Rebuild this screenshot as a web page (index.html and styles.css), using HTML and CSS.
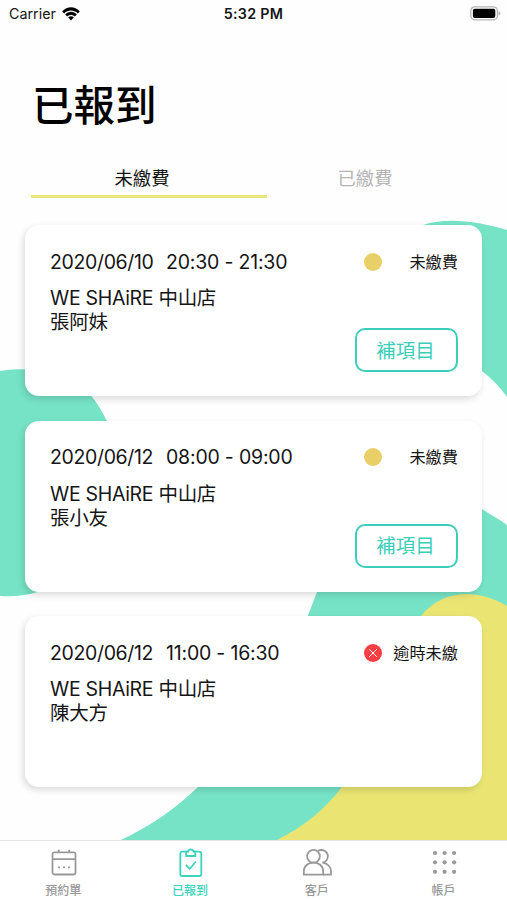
FILE: index.html
```html
<!DOCTYPE html>
<html lang="zh-Hant">

<head>
    <meta charset="UTF-8">
    <title>已報到</title>
    <link rel="stylesheet" href="styles.css">
</head>

<body>

    <div class="screen">
        <svg class="background" viewBox="0 0 507 840">
            <path class="green" d="M0 371 C18 368 39 369 59 374 C82 380 96 399 107 421 L115 592 H38 C24 596 12 597 0 596 Z" />
            <path class="green" d="M423 225 C446 217 478 221 507 230 V397 C500 387 492 379 482 371 L410 240 Z" />
            <path class="green" d="M507 525 C499 519 491 515 482 509 L330 540 L317 592 L300 636 L198 787 C174 810 150 826 121 840 H507 Z" />
            <path class="yellow" d="M507 606 C475 587 441 591 421 616 L342 787 C325 809 305 826 277 840 H507 Z" />
        </svg>

        <div class="status-bar">
            <div class="carrier">
                <span>Carrier</span>
                <svg width="18" height="14" viewBox="0 0 18 14">
                    <path d="M0.2 4.4 C5.2 -1 12.8 -1 17.8 4.4 L15.8 6.4 C12 2.6 6 2.6 2.2 6.4 Z" />
                    <path d="M3.2 7.4 C6.4 4 11.6 4 14.8 7.4 L12.8 9.4 C10.8 7.4 7.2 7.4 5.2 9.4 Z" />
                    <path d="M6.2 10.4 C7.8 8.9 10.2 8.9 11.8 10.4 L9 13.4 Z" />
                </svg>
            </div>
            <div class="time">5:32 PM</div>
            <div class="battery">
                <svg width="31" height="15" viewBox="0 0 31 15">
                    <rect x="0.8" y="0.8" width="26.6" height="13" rx="4" fill="#fff" stroke="#b5b5b5" stroke-width="1.3" />
                    <rect x="2.9" y="2.7" width="22.4" height="9.3" rx="2" />
                    <path d="M28.6 5 C31 6 31 8.8 28.6 9.8 Z" fill="#b5b5b5" />
                </svg>
            </div>
        </div>

        <h1>已報到</h1>

        <div class="tabs">
            <div class="tab tab-active">未繳費</div>
            <div class="tab">已繳費</div>
        </div>

        <div class="list">
            <div class="card">
                <div class="card-top">
                    <span class="date">2020/06/10</span>
                    <span class="hours">20:30 - 21:30</span>
                    <span class="dot"></span>
                    <span class="state">未繳費</span>
                </div>
                <div class="card-bottom">
                    <div class="info">
                        <div>WE SHAiRE 中山店</div>
                        <div>張阿妹</div>
                    </div>
                    <button>補項目</button>
                </div>
            </div>

            <div class="card">
                <div class="card-top">
                    <span class="date">2020/06/12</span>
                    <span class="hours">08:00 - 09:00</span>
                    <span class="dot"></span>
                    <span class="state">未繳費</span>
                </div>
                <div class="card-bottom">
                    <div class="info">
                        <div>WE SHAiRE 中山店</div>
                        <div>張小友</div>
                    </div>
                    <button>補項目</button>
                </div>
            </div>

            <div class="card">
                <div class="card-top">
                    <span class="date">2020/06/12</span>
                    <span class="hours">11:00 - 16:30</span>
                    <span class="dot dot-late">
                        <svg width="18" height="18" viewBox="0 0 18 18">
                            <path d="M5.2 5.2 L12.8 12.8 M12.8 5.2 L5.2 12.8" />
                        </svg>
                    </span>
                    <span class="state">逾時未繳</span>
                </div>
                <div class="card-bottom">
                    <div class="info">
                        <div>WE SHAiRE 中山店</div>
                        <div>陳大方</div>
                    </div>
                </div>
            </div>
        </div>

        <div class="nav">
            <div class="nav-item">
                <svg width="32" height="30" viewBox="0 0 32 30">
                    <rect x="5.5" y="5.3" width="23" height="22.2" rx="2" />
                    <path d="M5.5 12.2 H28.5 M11.7 2.8 V5.3 M22.2 2.8 V5.3" />
                    <path d="M11 20.3 h2 M16 20.3 h2 M21 20.3 h2" />
                </svg>
                <span>預約單</span>
            </div>
            <div class="nav-item nav-active">
                <svg width="32" height="30" viewBox="0 0 32 30">
                    <path d="M12 4.7 H8.3 Q6.3 4.7 6.3 6.7 V27 Q6.3 29 8.3 29 H25.3 Q27.3 29 27.3 27 V6.7 Q27.3 4.7 25.3 4.7 H21.3" />
                    <path d="M12.2 4.5 H14.2 C14.5 1.8 19 1.8 19.3 4.5 H21.3 V9 H12.2 Z" />
                    <path d="M11.8 18 L15.8 21.8 L22 14.5" />
                </svg>
                <span>已報到</span>
            </div>
            <div class="nav-item">
                <svg width="32" height="30" viewBox="0 0 32 30">
                    <circle cx="12.5" cy="9.3" r="6.4" />
                    <path d="M2.8 27.7 V24.5 C2.8 12.6 22.2 12.6 22.2 24.5 V27.7 Z" />
                    <path d="M17 3.7 C22 1.5 27.2 5 26.8 9.5 C26.6 12.5 24.8 15 21.5 15.5 C26.5 16.5 30 20 30 24.5 V27.7 H22.2" />
                </svg>
                <span>客戶</span>
            </div>
            <div class="nav-item">
                <svg class="dots" width="32" height="30" viewBox="0 0 32 30">
                    <circle cx="7" cy="6" r="2.1" />
                    <circle cx="16.6" cy="6" r="2.1" />
                    <circle cx="26.1" cy="6" r="2.1" />
                    <circle cx="7" cy="15.3" r="2.1" />
                    <circle cx="16.6" cy="15.3" r="2.1" />
                    <circle cx="26.1" cy="15.3" r="2.1" />
                    <circle cx="7" cy="24.8" r="2.1" />
                    <circle cx="16.6" cy="24.8" r="2.1" />
                    <circle cx="26.1" cy="24.8" r="2.1" />
                </svg>
                <span>帳戶</span>
            </div>
        </div>
    </div>

</body>

</html>
```
FILE: styles.css
```css
* {
    box-sizing: border-box;
}

body {
    margin: 0;
    font-family: Inter, "Noto Sans CJK TC", sans-serif;
    color: #151515;
    background: #fefefe;
}

.screen {
    position: relative;
    display: flex;
    flex-direction: column;
    width: 507px;
    height: 900px;
    overflow: hidden;
}

.background {
    position: absolute;
    top: 0;
    left: 0;
    width: 507px;
    height: 840px;
    z-index: -1;
}

.green {
    fill: #76e3c7;
}

.yellow {
    fill: #eae573;
}

.status-bar {
    display: grid;
    grid-template-columns: 1fr auto 1fr;
    align-items: center;
    height: 27px;
    padding: 0 6px 0 9px;
    font-size: 14.3px;
}

.carrier {
    display: flex;
    align-items: center;
    gap: 6px;
}

.time {
    padding-right: 3px;
    font-weight: 600;
    letter-spacing: 0.3px;
}

.battery {
    display: flex;
    justify-content: flex-end;
}

h1 {
    margin: 49px 0 0 32px;
    font-size: 41.5px;
    font-weight: 500;
    line-height: 60px;
    color: #000;
}

.tabs {
    display: flex;
    margin: 22px 0 0 31px;
}

.tab {
    width: 236px;
    height: 40px;
    padding-right: 40px;
    font-size: 18.3px;
    line-height: 40px;
    text-align: center;
    color: #b5b5b5;
}

.tab-active {
    padding-right: 14px;
    color: #151515;
    border-bottom: 3px solid #ebe37c;
}

.list {
    display: flex;
    flex-direction: column;
    gap: 24.5px;
    margin: 27px 25px 0;
}

.card {
    display: flex;
    flex-direction: column;
    height: 171px;
    padding: 22px 24px 24px 25px;
    font-size: 19.5px;
    line-height: 24px;
    background: #fff;
    border-radius: 14px;
    box-shadow: -2px 3px 7px rgba(0, 0, 0, 0.14);
}

.card-top {
    display: flex;
    align-items: center;
    height: 29px;
    margin-bottom: 10px;
}

.date {
    width: 116px;
    letter-spacing: -0.35px;
}

.hours {
    flex: 1;
    letter-spacing: -0.2px;
}

.dot {
    width: 18px;
    height: 18px;
    background: #e9cf67;
    border-radius: 50%;
}

.dot-late {
    background: #fb3e43;
}

.dot-late svg {
    display: block;
    fill: none;
    stroke: #fff;
}

.state {
    width: 76.5px;
    font-size: 16.2px;
    text-align: right;
}

.card-bottom {
    flex: 1;
    display: flex;
    justify-content: space-between;
}

.info {
    letter-spacing: -0.3px;
}

.card button {
    align-self: flex-end;
    width: 103px;
    height: 44px;
    padding: 0 2px 2px 0;
    font-family: inherit;
    font-size: 19.5px;
    color: #3bcfb9;
    background: #fff;
    border: 2px solid #3bcfb9;
    border-radius: 10px;
}

.nav {
    display: flex;
    height: 60px;
    margin-top: auto;
    background: #fff;
    border-top: 1px solid #e3e3e3;
}

.nav-item {
    flex: 1;
    display: flex;
    flex-direction: column;
    align-items: center;
    gap: 5px;
    padding-top: 6px;
    font-size: 12px;
    font-weight: 500;
    line-height: 18px;
    color: #999;
}

.nav-item svg {
    flex-shrink: 0;
    fill: none;
    stroke: currentColor;
    stroke-width: 1.8;
}

.nav-item .dots {
    fill: currentColor;
    stroke: none;
}

.nav-active {
    color: #3bd5bd;
}
```
